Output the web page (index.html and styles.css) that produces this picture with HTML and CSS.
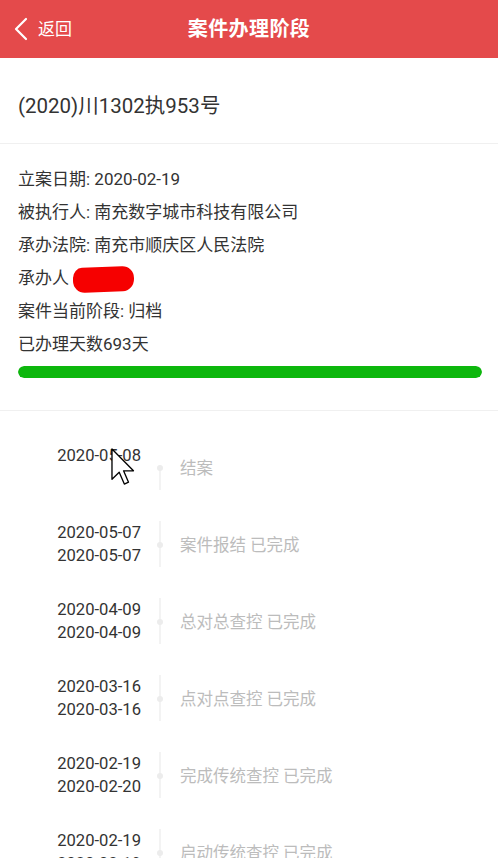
FILE: index.html
```html
<!DOCTYPE html>
<html lang="zh-CN">
<head>
<meta charset="utf-8">
<title>案件办理阶段</title>
<link rel="stylesheet" href="styles.css">
</head>
<body>
<div class="page">
  <header class="topbar">
    <div class="back">
      <svg class="chev" width="16" height="24" viewBox="0 0 16 24"><polyline points="13,2 3,12 13,22" fill="none" stroke="#fff" stroke-width="2.2" stroke-linecap="round" stroke-linejoin="round"/></svg>
      <span class="back-text">返回</span>
    </div>
    <h1 class="title">案件办理阶段</h1>
    <div class="spacer"></div>
  </header>

  <section class="case-no">(2020)川1302执953号</section>

  <section class="info">
    <div class="row">立案日期: 2020-02-19</div>
    <div class="row">被执行人: 南充数字城市科技有限公司</div>
    <div class="row">承办法院: 南充市顺庆区人民法院</div>
    <div class="row"><span>承办人</span><span class="redact"></span></div>
    <div class="row">案件当前阶段: 归档</div>
    <div class="row">已办理天数693天</div>
    <div class="bar"><div class="bar-fill" style="width:100%"></div></div>
  </section>

  <section class="timeline">
    <div class="item first">
      <div class="dates"><div>2020-05-08</div><div>&nbsp;</div></div>
      <div class="axis"><span class="dot"></span></div>
      <div class="label">结案</div>
    </div>
    <div class="item">
      <div class="dates"><div>2020-05-07</div><div>2020-05-07</div></div>
      <div class="axis"><span class="dot"></span></div>
      <div class="label">案件报结 已完成</div>
    </div>
    <div class="item">
      <div class="dates"><div>2020-04-09</div><div>2020-04-09</div></div>
      <div class="axis"><span class="dot"></span></div>
      <div class="label">总对总查控 已完成</div>
    </div>
    <div class="item">
      <div class="dates"><div>2020-03-16</div><div>2020-03-16</div></div>
      <div class="axis"><span class="dot"></span></div>
      <div class="label">点对点查控 已完成</div>
    </div>
    <div class="item">
      <div class="dates"><div>2020-02-19</div><div>2020-02-20</div></div>
      <div class="axis"><span class="dot"></span></div>
      <div class="label">完成传统查控 已完成</div>
    </div>
    <div class="item">
      <div class="dates"><div>2020-02-19</div><div>2020-02-19</div></div>
      <div class="axis"><span class="dot"></span></div>
      <div class="label">启动传统查控 已完成</div>
    </div>
  </section>

  <svg class="cursor" width="24" height="38" viewBox="0 0 12.6 20"><path d="M0.5,0.5 L0.5,16.5 L4.3,12.8 L7,19 L9.2,18 L6.6,12 L11.8,12 Z" fill="#fff" stroke="#000" stroke-width="0.7" stroke-linejoin="round"/></svg>
</div>
</body>
</html>
```

FILE: styles.css
```css
* { box-sizing: border-box; }
html, body { margin: 0; padding: 0; background: #fff; }
body {
  font-family: Roboto, "Noto Sans CJK SC", sans-serif;
  color: #333;
  overflow: hidden;
}
.page { position: relative; width: 498px; }

.topbar {
  height: 58px;
  background: #e44a4b;
  display: grid;
  grid-template-columns: 1fr auto 1fr;
  align-items: center;
  color: #fff;
}
.back {
  display: flex;
  align-items: center;
  padding-left: 13px;
}
.chev { display: block; margin-top: -1px; }
.back-text {
  font-size: 17px;
  margin-left: 9px;
  line-height: 1;
}
.title {
  margin: 0;
  font-size: 20px;
  font-weight: bold;
  line-height: 1;
  letter-spacing: 0.4px;
}

.case-no {
  font-size: 20.5px;
  line-height: 28px;
  padding: 34px 18px 23px;
  border-bottom: 1px solid #f0f0f0;
}

.info {
  padding: 19px 16px 32px 18px;
  font-size: 17px;
  border-bottom: 1px solid #f0f0f0;
}
.row {
  line-height: 33px;
  height: 33px;
  display: flex;
  align-items: center;
}
.redact {
  flex: none;
  display: block;
  width: 61px;
  height: 25px;
  margin-left: 4px;
  margin-top: 2px;
  background: #f60000;
  border-radius: 9px 12px 11px 12px / 10px 12px 12px 12px;
  transform: skewY(-2deg);
}
.bar {
  margin-top: 5px;
  height: 12px;
  border-radius: 6px;
  background: #eee;
  overflow: hidden;
}
.bar-fill {
  height: 100%;
  background: #0db70d;
  border-radius: 6px;
}

.timeline {
  padding-top: 33px;
}
.item {
  display: grid;
  grid-template-columns: 141px 38px 1fr;
  padding-bottom: 31px;
}
.dates {
  text-align: right;
  font-size: 16.6px;
  line-height: 23px;
  color: #333;
}
.axis {
  position: relative;
  display: flex;
  justify-content: center;
}
.axis::before {
  content: "";
  position: absolute;
  left: 50%;
  margin-left: -1px;
  width: 2px;
  top: 0;
  bottom: 0;
  background: #f3f3f3;
}
.item.first .axis::before { top: 24px; }
.dot {
  position: relative;
  margin-top: 21px;
  width: 6px;
  height: 6px;
  border-radius: 50%;
  background: #ececec;
}
.label {
  font-size: 16.5px;
  color: #bcbcbc;
  line-height: 23px;
  padding-top: 13px;
  padding-left: 1px;
}

.cursor {
  position: absolute;
  left: 111px;
  top: 448px;
}
```
